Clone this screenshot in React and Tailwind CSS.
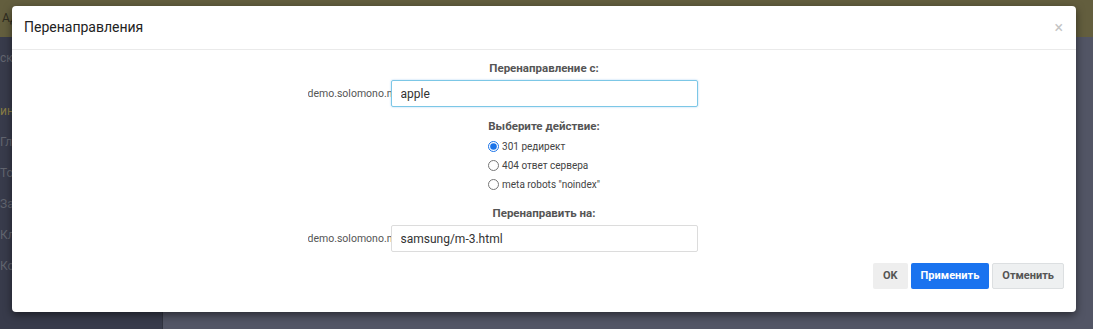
import { useState } from 'react'

const sideItems = ['ск', 'ин', 'Гл', 'То', 'За', 'Кл', 'Ко']

function Field({ label, value, focused }) {
  return (
    <>
      <div className="text-center text-[11.5px] font-bold text-[#555] leading-[18px]">{label}</div>
      <div className="grid grid-cols-[1fr_307px_1fr] items-center mt-[3px]">
        <div className="justify-self-end w-[83px] overflow-hidden whitespace-nowrap text-[10.5px] text-[#555]">demo.solomono.net/</div>
        <input
          defaultValue={value}
          className={'h-[27px] w-[307px] rounded-[2px] px-[9px] text-[12px] text-[#333] outline-none ' + (focused ? 'border border-[#7cc7e6] shadow-[0_0_2px_rgba(102,175,233,0.6)]' : 'border border-[#dcdcdc]')}
        />
        <div></div>
      </div>
    </>
  )
}

export default function App() {
  const [action, setAction] = useState('301')
  const options = [
    { v: '301', t: '301 редирект' },
    { v: '404', t: '404 ответ сервера' },
    { v: 'meta', t: 'meta robots "noindex"' },
  ]

  return (
    <div className="relative w-[1093px] h-[329px] overflow-hidden bg-[#545767]" style={{ fontFamily: 'Roboto, "Liberation Sans", sans-serif' }}>
      {/* page behind the overlay */}
      <div className="h-[37px] bg-[#635e3e] px-[2px] pt-[9px] text-[12px] text-[#2e2c20]">АД</div>
      <div className="flex h-[292px]">
        <div className="w-[163px] bg-[#383b4b] pt-[12px] border-r border-[#30333f]">
          {sideItems.map((s, i) => (
            <div key={s} className={'h-[31px] text-[12px] ' + (i === 1 ? 'text-[#8a7d45]' : 'text-[#62656f]')} style={{ marginTop: i === 1 ? 22 : 0 }}>{s}</div>
          ))}
        </div>
        <div className="flex-1 bg-[#525565]"></div>
      </div>

      {/* modal */}
      <div className="absolute left-[12px] top-[6px] w-[1064px] h-[306px] bg-white rounded-[4px] shadow-[0_3px_9px_rgba(0,0,0,0.5)] flex flex-col">
        <div className="h-[44px] flex items-center justify-between px-[12px] border-b border-[#eaeaea]">
          <div className="text-[14px] text-[#222]">Перенаправления</div>
          <button className="text-[16px] leading-none text-[#c4c4c4] mr-[1px]">×</button>
        </div>

        <div className="pt-[9px]">
          <Field label="Перенаправление с:" value="apple" focused />

          <div className="mt-[10px] text-center text-[11.5px] font-bold text-[#555] leading-[18px]">Выберите действие:</div>
          <div className="flex justify-center mt-[2px]">
            <div className="flex flex-col">
              {options.map(o => (
                <label key={o.v} className="flex items-center h-[19px] text-[10px] text-[#444]">
                  <input
                    type="radio"
                    name="act"
                    checked={action === o.v}
                    onChange={() => setAction(o.v)}
                    className="m-0 mr-[3px] w-[11px] h-[11px] accent-[#1a73e8]"
                  />
                  {o.t}
                </label>
              ))}
            </div>
          </div>

          <div className="mt-[10px]">
            <Field label="Перенаправить на:" value="samsung/m-3.html" />
          </div>
        </div>

        <div className="flex justify-end gap-[3px] px-[12px] mt-[11px]">
          <button className="h-[26px] px-[10px] rounded-[2px] bg-[#eeeeee] text-[11px] font-bold text-[#555]">OK</button>
          <button className="h-[26px] px-[10px] rounded-[2px] bg-[#1a73ef] text-[11px] font-bold text-white">Применить</button>
          <button className="h-[26px] px-[9px] rounded-[2px] bg-[#eef0f1] border border-[#dcdfe1] text-[11px] font-bold text-[#555]">Отменить</button>
        </div>
      </div>
    </div>
  )
}
